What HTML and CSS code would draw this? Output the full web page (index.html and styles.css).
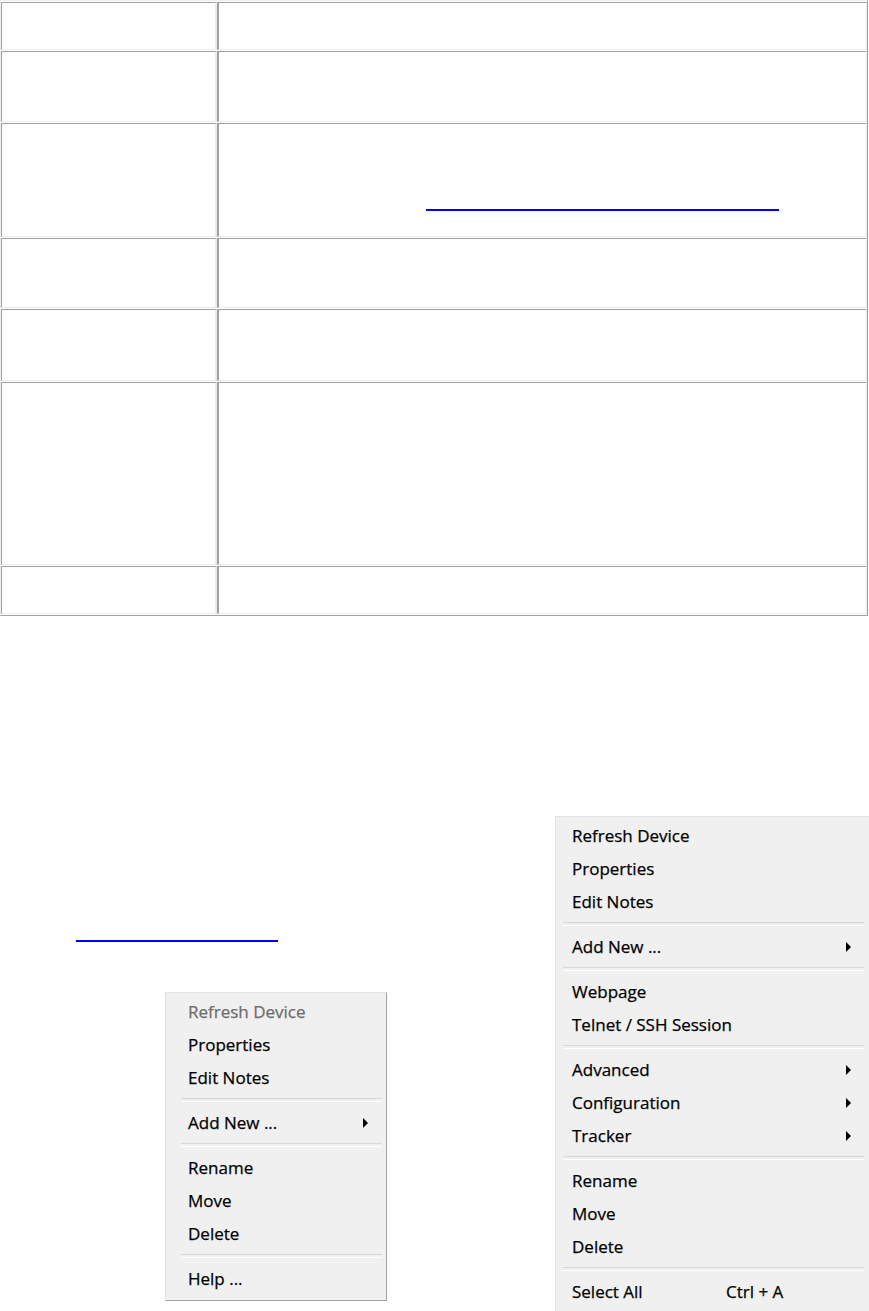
FILE: index.html
```html
<!DOCTYPE html>
<html lang="en">
<head>
<meta charset="utf-8">
<title>Device context menus</title>
<link rel="stylesheet" href="styles.css">
</head>
<body>
<div class="doc-table">
  <div class="row row-1"><div class="cell cell-label"></div><div class="cell cell-body"></div></div>
  <div class="row row-2"><div class="cell cell-label"></div><div class="cell cell-body"></div></div>
  <div class="row row-3"><div class="cell cell-label"></div><div class="cell cell-body"><a class="ref-link ref-link-table" href="#"></a></div></div>
  <div class="row row-4"><div class="cell cell-label"></div><div class="cell cell-body"></div></div>
  <div class="row row-5"><div class="cell cell-label"></div><div class="cell cell-body"></div></div>
  <div class="row row-6"><div class="cell cell-label"></div><div class="cell cell-body"></div></div>
  <div class="row row-7"><div class="cell cell-label"></div><div class="cell cell-body"></div></div>
</div>

<div class="lower">
  <div class="lower-left">
    <a class="ref-link ref-link-page" href="#"></a>
    <div class="menu menu-small">
      <div class="menu-item disabled">Refresh Device</div>
      <div class="menu-item">Properties</div>
      <div class="menu-item">Edit Notes</div>
      <div class="menu-sep"></div>
      <div class="menu-item">Add New ...<span class="arrow"></span></div>
      <div class="menu-sep"></div>
      <div class="menu-item">Rename</div>
      <div class="menu-item">Move</div>
      <div class="menu-item">Delete</div>
      <div class="menu-sep"></div>
      <div class="menu-item">Help ...</div>
    </div>
  </div>
  <div class="lower-right">
    <div class="menu menu-large">
      <div class="menu-item">Refresh Device</div>
      <div class="menu-item">Properties</div>
      <div class="menu-item">Edit Notes</div>
      <div class="menu-sep"></div>
      <div class="menu-item">Add New ...<span class="arrow"></span></div>
      <div class="menu-sep"></div>
      <div class="menu-item">Webpage</div>
      <div class="menu-item">Telnet / SSH Session</div>
      <div class="menu-sep"></div>
      <div class="menu-item">Advanced<span class="arrow"></span></div>
      <div class="menu-item">Configuration<span class="arrow"></span></div>
      <div class="menu-item">Tracker<span class="arrow"></span></div>
      <div class="menu-sep"></div>
      <div class="menu-item">Rename</div>
      <div class="menu-item">Move</div>
      <div class="menu-item">Delete</div>
      <div class="menu-sep"></div>
      <div class="menu-item"><span class="item-label">Select All</span><span class="shortcut">Ctrl + A</span></div>
    </div>
  </div>
</div>
</body>
</html>
```
FILE: styles.css
```css
* { box-sizing: border-box; }

html, body {
  margin: 0;
  padding: 0;
  background: #ffffff;
  overflow: hidden;
}

body {
  width: 869px;
  height: 1311px;
  font-family: "Open Sans", "Noto Sans", sans-serif;
  color: #000;
}

/* ---------- bordered document table ---------- */
.doc-table {
  display: flex;
  flex-direction: column;
  gap: 1px;
  width: 868px;
  padding: 1px 0;
  border: 1px solid;
  border-color: #efefef #a0a0a0 #a0a0a0 #efefef;
}

.row { display: flex; }
.row-1 { height: 48px; }
.row-2 { height: 71px; }
.row-3 { height: 114px; }
.row-4 { height: 70px; }
.row-5 { height: 72px; }
.row-6 { height: 183px; }
.row-7 { height: 48px; }

.cell {
  border: 1px solid;
  border-color: #a0a0a0 #ececec #ececec #a0a0a0;
}
.cell-label {
  width: 216px;
  flex: none;
  border-right-width: 2px;
}
.cell-body {
  flex: 1;
  border-left-width: 2px;
}

.ref-link {
  display: block;
  height: 2px;
  background: #0000ff;
}
.ref-link-table {
  width: 353px;
  margin: 85px 0 0 207px;
}

/* ---------- lower area ---------- */
.lower {
  display: flex;
  align-items: flex-start;
}
.lower-left {
  width: 555px;
  flex: none;
}
.lower-right {
  flex: none;
  margin-top: 200px;
}

.ref-link-page {
  width: 202px;
  margin: 324px 0 0 76px;
}

/* ---------- context menus ---------- */
.menu {
  background: #f0f0f0;
  border: 1px solid;
  border-color: #e2e2e2 #a0a0a0 #a0a0a0 #e2e2e2;
  font-size: 17px;
  line-height: 1;
  -webkit-text-stroke: 0.25px #000;
}
.menu-small {
  width: 222px;
  margin: 50px 0 0 165px;
  padding: 2px 0 5px;
}
.menu-large {
  width: 330px;
  padding: 2px 0 6px;
}

.menu-item {
  display: flex;
  align-items: center;
  height: 33px;
  white-space: nowrap;
}
.menu-small .menu-item { padding: 0 18px 0 22px; }
.menu-large .menu-item { padding: 0 33px 0 16px; }

.menu-item.disabled {
  color: #6d6d6d;
  -webkit-text-stroke: 0.25px #6d6d6d;
}

.arrow {
  margin-left: auto;
  width: 0;
  height: 0;
  border-top: 5px solid transparent;
  border-bottom: 5px solid transparent;
  border-left: 5px solid #000;
}

.item-label { width: 154px; flex: none; }

.menu-sep {
  height: 12px;
  display: flex;
  align-items: center;
}
.menu-sep::before {
  content: "";
  flex: 1;
  height: 2px;
  border-top: 1px solid #d7d7d7;
  border-bottom: 1px solid #ffffff;
}
.menu-small .menu-sep { padding: 0 4px 0 15px; }
.menu-large .menu-sep { padding: 0 20px 0 7px; }
```
